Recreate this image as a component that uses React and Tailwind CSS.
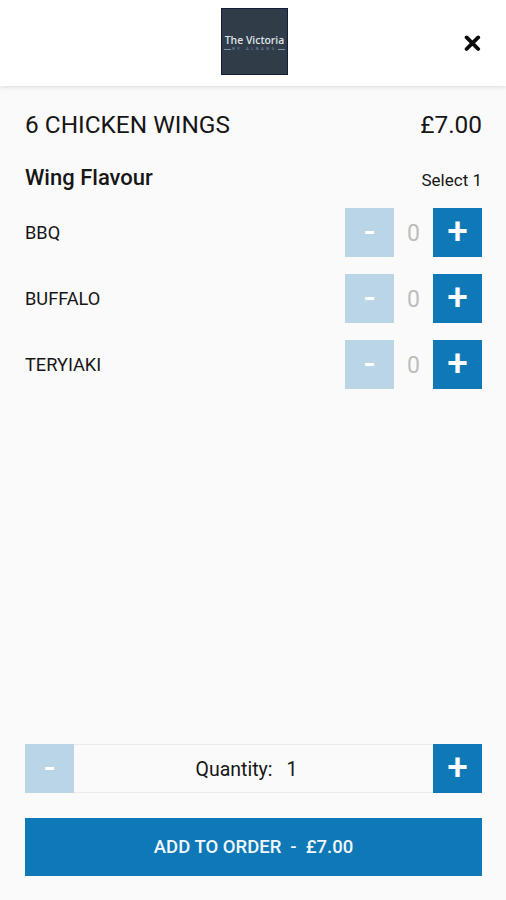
import React, { useState } from 'react';

const flavours = ['BBQ', 'BUFFALO', 'TERYIAKI'];

const StepButton = ({ label, disabled, onClick }) => (
    <button
        type="button"
        disabled={disabled}
        onClick={onClick}
        className={`flex h-[49px] w-[49px] shrink-0 items-center justify-center leading-none font-medium text-white ${disabled ? 'bg-[#bad5e6] pb-[3px] text-[34px]' : 'bg-[#0e79b6] pb-[2px] text-[37px]'}`}
    >
        {label}
    </button>
);

const Header = () => (
    <header className="relative flex h-[86px] shrink-0 justify-center bg-white pt-2 pl-[3px] shadow-[0_1px_5px_rgba(0,0,0,0.13)]">
        <div className="flex h-[67px] w-[67px] flex-col items-center border border-[#141e38] bg-[#303c48] pt-[25px]">
            <div className="text-[10.4px] leading-[12px] font-semibold whitespace-nowrap text-[#dfe4ea] font-['Open_Sans',sans-serif]">The Victoria</div>
            <div className="mt-px flex w-full items-center gap-px px-[2px] text-[#7b95ad]">
                <span className="h-px flex-1 bg-current" />
                <span className="text-[4px] leading-[4px] tracking-[2.6px] whitespace-nowrap">BY ALBANS</span>
                <span className="h-px flex-1 bg-current" />
            </div>
        </div>
        <button type="button" aria-label="Close" className="absolute top-[35px] right-[25px]">
            <svg className="h-[17px] w-[17px]" viewBox="0 0 17 17" fill="none" stroke="#0b0b0b" strokeWidth="3.8" strokeLinecap="round">
                <path d="M2.6 2.4L14.2 14M14.2 2.4L2.6 14" />
            </svg>
        </button>
    </header>
);

const App = () => {
    const [counts, setCounts] = useState([0, 0, 0]);
    const [quantity, setQuantity] = useState(1);

    const changeCount = (index, delta) => {
        setCounts(counts.map((count, i) => (i === index ? count + delta : count)));
    };

    const picked = counts.reduce((sum, count) => sum + count, 0);

    return (
        <div className="flex h-screen flex-col bg-[#fafafa] text-[#161616] font-['Roboto',sans-serif]">
            <Header />

            <main className="flex flex-1 flex-col px-6 pt-6 pl-[25px]">
                <div className="flex items-center justify-between text-[24.4px] leading-[30px]">
                    <h1>6 CHICKEN WINGS</h1>
                    <span>£7.00</span>
                </div>

                <div className="mt-[23px] flex items-end justify-between">
                    <h2 className="text-[22px] leading-[30px] font-medium">Wing Flavour</h2>
                    <span className="pb-px text-[17px] leading-6">Select 1</span>
                </div>

                <div className="mt-[15px] flex flex-col gap-[17px]">
                    {flavours.map((name, idx) => (
                        <div key={name} className="flex items-center justify-between">
                            <span className="text-[18.2px]">{name}</span>
                            <div className="flex items-center">
                                <StepButton label="-" disabled={counts[idx] === 0} onClick={() => changeCount(idx, -1)} />
                                <span className="w-[39px] pt-[3px] text-center text-[23px] text-[#bdbdbd]">{counts[idx]}</span>
                                <StepButton label="+" disabled={picked >= 1} onClick={() => changeCount(idx, 1)} />
                            </div>
                        </div>
                    ))}
                </div>
            </main>

            <footer className="px-6 pb-6 pl-[25px]">
                <div className="flex items-center">
                    <StepButton label="-" disabled={quantity === 1} onClick={() => setQuantity(quantity - 1)} />
                    <div className="flex h-[49px] flex-1 items-center justify-center gap-[14px] border-y border-[#ebebeb] pt-[2px] pr-[14px] text-[19.5px]">
                        <span>Quantity:</span>
                        <span>{quantity}</span>
                    </div>
                    <StepButton label="+" onClick={() => setQuantity(quantity + 1)} />
                </div>

                <button type="button" className="mt-[25px] flex h-[58px] w-full items-center justify-center gap-[9px] bg-[#0e79b6] pt-px text-[18.5px] font-medium text-[#f2f7fd]">
                    <span>ADD TO ORDER</span>
                    <span>-</span>
                    <span>£{(7 * quantity).toFixed(2)}</span>
                </button>
            </footer>
        </div>
    );
};

export default App;
